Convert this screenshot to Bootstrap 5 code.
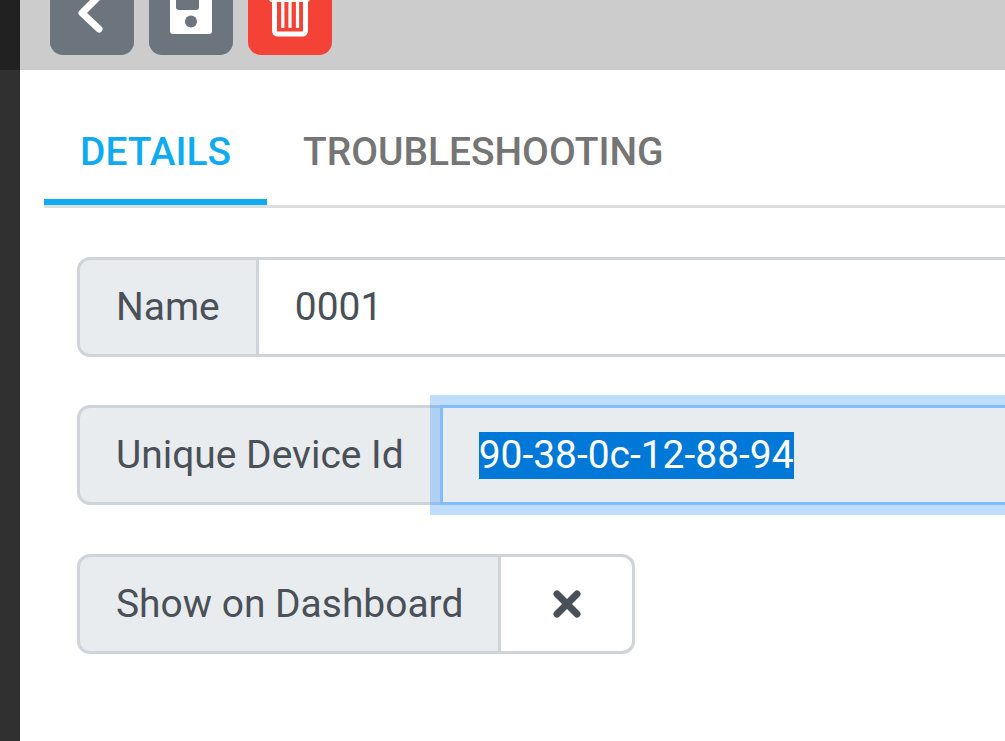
<!DOCTYPE html>
<html lang="en">
<head>
<meta charset="utf-8">
<title>Device details</title>
<link href="https://cdn.jsdelivr.net/npm/bootstrap@5.3.0/dist/css/bootstrap.min.css" rel="stylesheet">
<style>
html,body{height:741px;overflow:hidden;background:#fff;font-family:Roboto,sans-serif}
.shell{height:741px;overflow:hidden}
.rail{width:20px;background:#303030;flex:none}
.rail-top{height:70px;background:#212121}
.main-pane{min-width:0;flex:1;overflow:hidden}
.toolbar{height:70px;background:#ccc;padding:0 0 15px 30px;gap:15px;overflow:hidden}
.tool{width:84px;height:84px;flex:none;border:0;border-radius:13px;padding:0;background:#6c757d;display:flex;align-items:flex-end;justify-content:center}
.tool-danger{background:#f44336}
.tool svg{display:block}
.tabbar{margin:53px 0 0 24px;border-bottom:3px solid #dcdfe2;height:85px}
.tabitem{font-size:38.9px;font-weight:500;line-height:43px;padding:7.4px 36px 0;height:82px;color:#757575;text-decoration:none;border-bottom:6px solid transparent}
.tabitem.on{color:#0fabf0;border-bottom-color:#0fabf0}
.fields{padding:48.5px 0 0 57px}
.fieldrow{height:100px;margin-bottom:48.5px;width:calc(100% + 120px);flex-wrap:nowrap}
.fieldrow .input-group-text,.fieldrow .form-control{font-size:38.95px;line-height:46px;color:#495057;border:3px solid #ced4da;border-radius:13px;padding:0 36px;height:100px;display:flex;align-items:center}
.fieldrow .input-group-text{background:#e9ecef;flex:none}
.fieldrow .form-control{flex:1;background:#fff;border-top-left-radius:0;border-bottom-left-radius:0;margin-left:-3px!important}
.fieldrow .lbl{border-top-right-radius:0;border-bottom-right-radius:0}
.fieldrow .focused{background:#e9ecef;border-color:#80bdff;box-shadow:0 0 0 10px rgba(0,123,255,.25);position:relative;z-index:3}
.picked{background:#0078d7;color:#fff;display:inline-block;height:47px;line-height:47px}
.fieldrow.short{width:558px}
.fieldrow.short .lbl{border-radius:13px;position:relative;z-index:4;padding-right:35px}
.fieldrow.short .form-control{flex:none;width:137px;padding:0;justify-content:center;border-radius:0 13px 13px 0}
</style>
</head>
<body>
<div class="shell d-flex">
  <div class="rail"><div class="rail-top"></div></div>
  <div class="main-pane">
    <div class="toolbar d-flex align-items-end">
      <button class="tool" type="button" aria-label="Back">
        <svg width="84" height="84" viewBox="0 0 84 84"><path d="M49 25 32 42 49 58" fill="none" stroke="#fff" stroke-width="7" stroke-linecap="round" stroke-linejoin="round"/></svg>
      </button>
      <button class="tool" type="button" aria-label="Save">
        <svg width="84" height="84" viewBox="0 0 84 84"><path d="M24 21h32l7 7v32a3 3 0 0 1-3 3H24a3 3 0 0 1-3-3V24a3 3 0 0 1 3-3z" fill="#fff"/><path d="M27 21h23v15a3 3 0 0 1-3 3H30a3 3 0 0 1-3-3z" fill="#6c757d"/><circle cx="42" cy="50.5" r="6" fill="#6c757d"/></svg>
      </button>
      <button class="tool tool-danger" type="button" aria-label="Delete">
        <svg width="84" height="84" viewBox="0 0 84 84"><path d="M21 20h41v8a3 3 0 0 1-3 3H24a3 3 0 0 1-3-3z" fill="#fff"/><path d="M26.500 28v32a3 3 0 0 0 3 3h25a3 3 0 0 0 3-3V28" fill="none" stroke="#fff" stroke-width="5"/><path d="M34.800 31v26M42 31v26M49.500 31v26" fill="none" stroke="#fff" stroke-width="3.200"/></svg>
      </button>
    </div>
    <nav class="tabbar d-flex">
      <a class="tabitem on" href="#">DETAILS</a>
      <a class="tabitem" href="#">TROUBLESHOOTING</a>
    </nav>
    <div class="fields">
      <div class="input-group fieldrow">
        <span class="input-group-text lbl">Name</span>
        <div class="form-control">0001</div>
      </div>
      <div class="input-group fieldrow">
        <span class="input-group-text lbl">Unique Device Id</span>
        <div class="form-control focused"><span class="picked">90-38-0c-12-88-94</span></div>
      </div>
      <div class="input-group fieldrow short">
        <span class="input-group-text lbl">Show on Dashboard</span>
        <div class="form-control"><svg width="30" height="30" viewBox="0 0 30 30"><path d="M5 5 25 25M25 5 5 25" stroke="#495057" stroke-width="7" stroke-linecap="round"/></svg></div>
      </div>
    </div>
  </div>
</div>
<script src="https://cdn.jsdelivr.net/npm/bootstrap@5.3.0/dist/js/bootstrap.bundle.min.js"></script>
</body>
</html>
